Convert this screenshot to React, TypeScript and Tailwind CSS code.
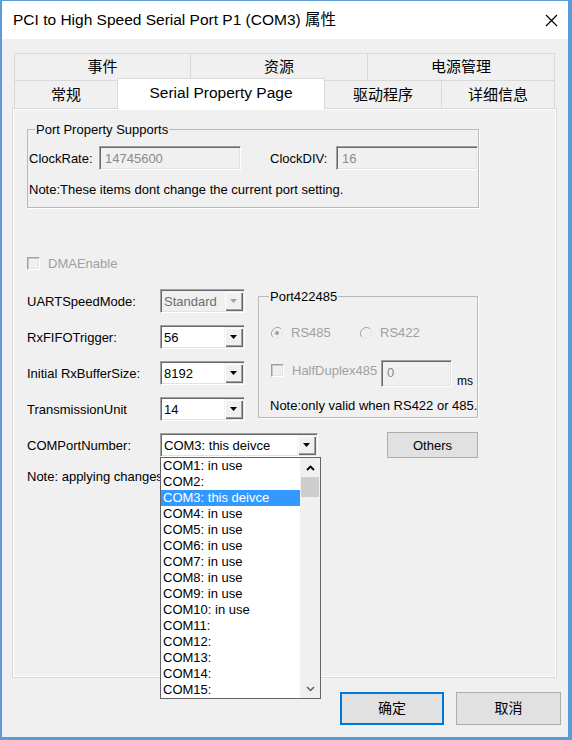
import React from "react";

const FONT = "font-['Liberation_Sans','Noto_Sans_CJK_SC',sans-serif]";

function Arrow({ color }: { color: string }) {
  return (
    <svg width="7" height="4" viewBox="0 0 7 4">
      <path d="M0 0H7L3.5 4Z" fill={color} />
    </svg>
  );
}

function Combo({
  w,
  value,
  disabled,
  children,
}: {
  w: string;
  value: string;
  disabled?: boolean;
  children?: React.ReactNode;
}) {
  return (
    <div
      className={`relative flex h-[24px] ${w} items-stretch border border-t-[#a0a0a0] border-l-[#a0a0a0] border-r-white border-b-white shadow-[inset_1px_1px_0_#696969,inset_-1px_-1px_0_#e3e3e3] ${
        disabled ? "bg-[#f0f0f0]" : "bg-white"
      }`}
    >
      <div
        className={`flex flex-1 items-center pl-[3px] pt-[1px] text-[13px] leading-[15px] ${
          disabled ? "text-[#6d6d6d]" : "text-black"
        }`}
      >
        {value}
      </div>
      <div className="my-[1px] mr-[1px] flex w-[19px] items-center justify-center bg-[#f0f0f0] shadow-[inset_1px_1px_0_#f0f0f0,inset_2px_2px_0_#ffffff,inset_-1px_-1px_0_#696969,inset_-2px_-2px_0_#a0a0a0]">
        <Arrow color={disabled ? "#a0a0a0" : "#000000"} />
      </div>
      {children}
    </div>
  );
}

function DisabledInput({ w, h, value }: { w: string; h: string; value: string }) {
  return (
    <div
      className={`flex ${w} ${h} items-start border border-t-[#a0a0a0] border-l-[#a0a0a0] border-r-white border-b-white bg-[#f0f0f0] pl-[5px] pt-[4px] text-[13px] leading-[15px] text-[#8a8a8a] shadow-[inset_1px_1px_0_#696969,inset_-1px_-1px_0_#e3e3e3]`}
    >
      {value}
    </div>
  );
}

function CheckBox() {
  return (
    <div className="h-[13px] w-[13px] border border-t-[#a0a0a0] border-l-[#a0a0a0] border-r-white border-b-white bg-[#f0f0f0] shadow-[inset_1px_1px_0_#c8c8c8,inset_-1px_-1px_0_#e3e3e3]" />
  );
}

function Radio({ checked }: { checked?: boolean }) {
  return (
    <svg width="12" height="12" viewBox="0 0 12 12">
      <path d="M10.2 1.8A6 6 0 0 0 1.8 10.2" fill="none" stroke="#a0a0a0" strokeWidth="1" />
      <path d="M1.8 10.2A6 6 0 0 0 10.2 1.8" fill="none" stroke="#e3e3e3" strokeWidth="1" />
      <circle cx="6" cy="6" r="4.5" fill="#f0f0f0" />
      {checked && <circle cx="6" cy="6" r="2" fill="#a0a0a0" />}
    </svg>
  );
}

const items = [
  "COM1: in use",
  "COM2:",
  "COM3: this deivce",
  "COM4: in use",
  "COM5: in use",
  "COM6: in use",
  "COM7: in use",
  "COM8: in use",
  "COM9: in use",
  "COM10: in use",
  "COM11:",
  "COM12:",
  "COM13:",
  "COM14:",
  "COM15:",
];

function DropList() {
  return (
    <div className="absolute left-[-1px] top-[23px] z-20 flex w-[161px] border border-[#646464] bg-white">
      <div className="flex w-[139px] flex-col">
        {items.map((t, i) => (
          <div
            key={t}
            className={`h-[16px] whitespace-nowrap pl-[2px] text-[13px] leading-[16px] ${
              i === 2 ? "bg-[#3399ff] text-white" : "text-black"
            }`}
          >
            {t}
          </div>
        ))}
      </div>
      <div className="flex w-[20px] flex-col bg-[#f0f0f0]">
        <div className="flex h-[19px] items-center justify-center">
          <svg width="9" height="6" viewBox="0 0 9 6">
            <path d="M1 5L4.5 1.5L8 5" fill="none" stroke="#000" strokeWidth="1.8" />
          </svg>
        </div>
        <div className="mx-[1px] h-[20px] bg-[#cdcdcd]" />
        <div className="flex-1" />
        <div className="flex h-[19px] items-center justify-center">
          <svg width="9" height="6" viewBox="0 0 9 6">
            <path d="M1 1L4.5 4.5L8 1" fill="none" stroke="#606060" strokeWidth="1.5" />
          </svg>
        </div>
      </div>
    </div>
  );
}

export default function App() {
  return (
    <div
      className={`${FONT} flex h-[740px] w-[572px] flex-col border-t border-l-2 border-r-4 border-b-[3px] border-[#5b9bd8] bg-[#f0f0f0] text-black`}
    >
      {/* Title bar */}
      <div className="flex h-[38px] items-center justify-between bg-white pl-[11px] pr-[10px]">
        <span className="text-[15.5px] leading-[18px]">PCI to High Speed Serial Port P1 (COM3) 属性</span>
        <svg width="13" height="13" viewBox="0 0 13 13">
          <path d="M1 1L12 12M12 1L1 12" stroke="#000" strokeWidth="1.2" />
        </svg>
      </div>

      {/* Body */}
      <div className="flex flex-1 flex-col pl-[10px] pt-[14px]">
        {/* Tabs */}
        <div className="ml-[2px] flex w-[541px] flex-col">
          <div className="flex h-[27px]">
            {[
              ["事件", "w-[176px]"],
              ["资源", "w-[177px]"],
              ["电源管理", "w-[188px]"],
            ].map(([t, w], i) => (
              <div
                key={t}
                className={`flex ${w} items-center justify-center border-t border-l border-[#d9d9d9] text-[15px] leading-[18px] ${
                  i === 2 ? "border-r" : ""
                }`}
              >
                {t}
              </div>
            ))}
          </div>
          <div className="flex h-[28px] items-end">
            <div className="flex h-[28px] w-[103px] items-center justify-center border-t border-l border-[#d9d9d9] text-[15px] leading-[18px]">
              常规
            </div>
            <div className="relative z-10 -mb-[1px] flex h-[31px] w-[208px] items-center justify-center border-x border-t border-[#d9d9d9] bg-white pb-[3px] text-[15.5px] leading-[18px]">
              Serial Property Page
            </div>
            <div className="flex h-[28px] w-[116px] items-center justify-center border-t border-[#d9d9d9] text-[15px] leading-[18px]">
              驱动程序
            </div>
            <div className="flex h-[28px] w-[114px] items-center justify-center border-t border-l border-r border-[#d9d9d9] text-[15px] leading-[18px]">
              详细信息
            </div>
          </div>
        </div>

        {/* Panel */}
        <div className="flex h-[570px] w-[545px] flex-col border border-[#d9d9d9] bg-[#f0f0f0] shadow-[inset_1px_1px_0_#ffffff,inset_-1px_-1px_0_#ffffff] text-[13px] leading-[15px]">
          {/* Port Property Supports */}
          <fieldset className="ml-[14px] mt-[13px] w-[451px] border border-[#b9b9b9] pb-[10px] shadow-[1px_1px_0_#ffffff]">
            <legend className="ml-[7px] px-[1px] text-[13px] leading-[15px]">Port Property Supports</legend>
            <div className="mt-[9px] flex h-[24px] items-center">
              <span className="w-[71px] pl-[1px]">ClockRate:</span>
              <DisabledInput w="w-[142px]" h="h-[24px]" value="14745600" />
              <span className="ml-[29px] w-[66px]">ClockDIV:</span>
              <DisabledInput w="w-[142px]" h="h-[24px]" value="16" />
            </div>
            <div className="mt-[12px] pl-[1px]">Note:These items dont change the current port setting.</div>
          </fieldset>

          {/* DMAEnable */}
          <div className="ml-[14px] mt-[48px] flex h-[14px] items-center">
            <CheckBox />
            <span className="ml-[8px] text-[#a0a0a0]">DMAEnable</span>
          </div>

          {/* Settings + Port422485 */}
          <div className="ml-[14px] mt-[19px] flex items-start">
            <div className="flex w-[231px] flex-col gap-[12px]">
              <div className="flex h-[24px] items-center">
                <span className="w-[133px]">UARTSpeedMode:</span>
                <Combo w="w-[85px]" value="Standard" disabled />
              </div>
              <div className="flex h-[24px] items-center">
                <span className="w-[133px]">RxFIFOTrigger:</span>
                <Combo w="w-[85px]" value="56" />
              </div>
              <div className="flex h-[24px] items-center">
                <span className="w-[133px]">Initial RxBufferSize:</span>
                <Combo w="w-[85px]" value="8192" />
              </div>
              <div className="flex h-[24px] items-center">
                <span className="w-[133px]">TransmissionUnit</span>
                <Combo w="w-[85px]" value="14" />
              </div>
            </div>

            <fieldset className="h-[129px] w-[220px] border border-[#b9b9b9] shadow-[1px_1px_0_#ffffff]">
              <legend className="ml-[10px] px-[1px] text-[13px] leading-[15px]">Port422485</legend>
              <div className="mt-[21px] flex h-[15px] items-center pl-[12px] text-[#a0a0a0]">
                <div className="flex w-[89px] items-center">
                  <Radio checked />
                  <span className="ml-[8px]">RS485</span>
                </div>
                <Radio />
                <span className="ml-[8px]">RS422</span>
              </div>
              <div className="mt-[20px] flex items-start pl-[12px]">
                <div className="flex h-[20px] items-center">
                  <CheckBox />
                  <span className="ml-[8px] w-[89px] text-[#a0a0a0]">HalfDuplex485</span>
                </div>
                <DisabledInput w="w-[71px]" h="h-[27px]" value="0" />
                <span className="ml-[5px] self-end text-[12px] leading-[12px]">ms</span>
              </div>
              <div className="mt-[11px] whitespace-nowrap pl-[11px]">Note:only valid when RS422 or 485.</div>
            </fieldset>
          </div>

          {/* COM port row */}
          <div className="ml-[14px] mt-[12px] flex h-[24px] items-center">
            <span className="w-[133px]">COMPortNumber:</span>
            <Combo w="w-[158px]" value="COM3: this deivce">
              <DropList />
            </Combo>
            <div className="ml-[69px] flex h-[26px] w-[91px] items-center justify-center border border-[#adadad] bg-[#e1e1e1]">
              Others
            </div>
          </div>

          <div className="ml-[14px] mt-[12px] w-[133px] overflow-hidden whitespace-nowrap">Note: applying changes</div>
        </div>

        {/* Dialog buttons */}
        <div className="mt-[14px] flex justify-end gap-[12px] pr-[7px]">
          <div className="flex h-[33px] w-[104px] items-center justify-center border-2 border-[#0078d7] bg-[#e1e1e1] text-[14px]">
            确定
          </div>
          <div className="flex h-[33px] w-[105px] items-center justify-center border border-[#adadad] bg-[#e1e1e1] text-[14px]">
            取消
          </div>
        </div>
      </div>
    </div>
  );
}
